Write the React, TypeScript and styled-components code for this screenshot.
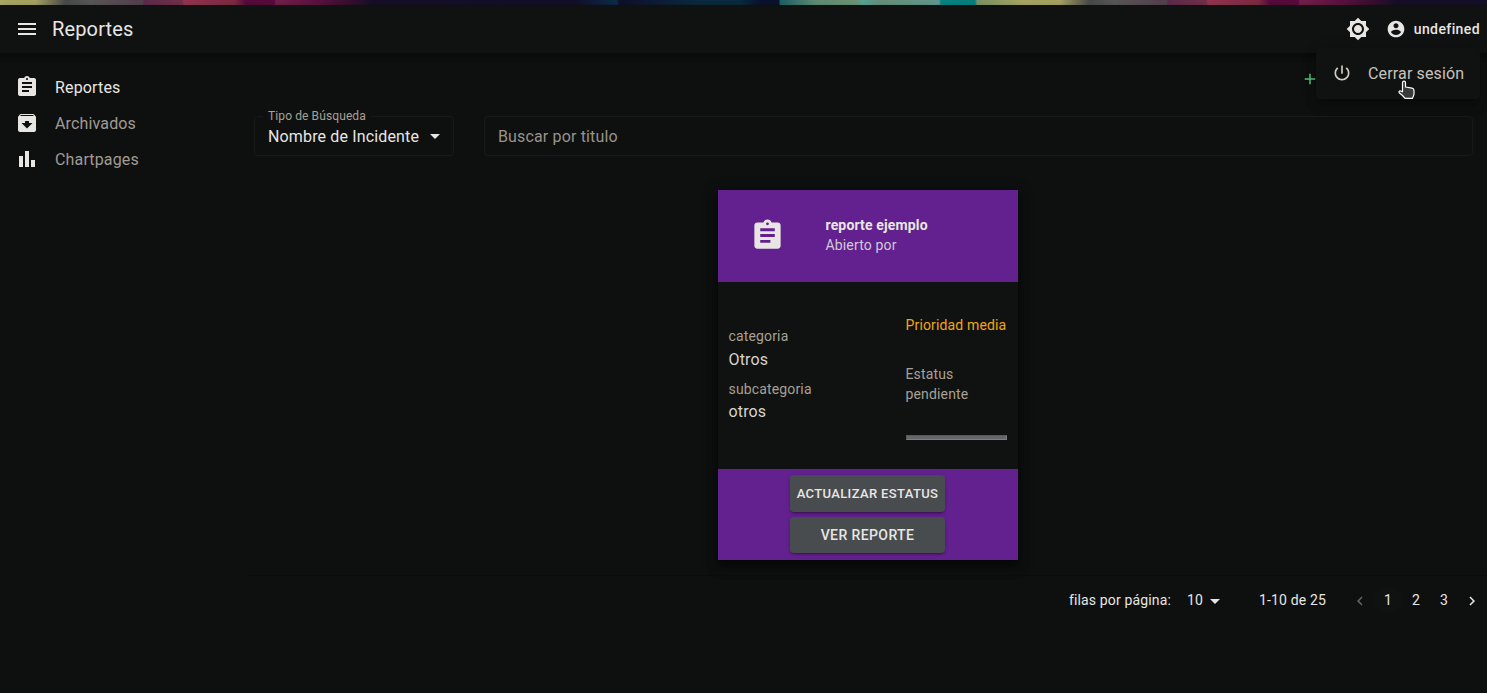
import React from "react";
import styled, { createGlobalStyle, css } from "styled-components";

const Global = createGlobalStyle`
  *, *::before, *::after { box-sizing: border-box; }
  html, body { margin: 0; background: #0e100f; }
  body { font-family: Roboto, "Liberation Sans", sans-serif; font-size: 16px; color: #e8e6e3; overflow: hidden; }
`;

const Page = styled.div`
  height: 693px;
  display: flex;
  flex-direction: column;
  background: #0e100f;
`;

const Wallpaper = styled.div`
  height: 5px;
  flex: none;
  background: repeating-linear-gradient(
    90deg,
    #aaa862 0,
    #a6a363 36px,
    #47494b 66px,
    #5a5858 90px,
    #54404e 143px,
    #5b2b4b 144px,
    #73304a 182px,
    #943550 184px,
    #7d2942 235px,
    #560a3b 246px,
    #580a3c 274px,
    #74204a 276px,
    #5a1040 320px,
    #38102f 348px,
    #160f28 372px,
    #130f28 575px,
    #0d2c48 617px,
    #0f1028 619px,
    #0e1a34 650px,
    #0a2b3d 700px,
    #0a2b3d 740px,
    #0a1230 760px,
    #0a1428 779px,
    #1b6068 780px,
    #5f8c76 815px,
    #6d9574 858px,
    #55a698 862px,
    #679079 880px,
    #629a90 939px,
    #078584 941px,
    #087f7d 975px,
    #7b9468 977px,
    #aaa862 1024px
  );
`;

const Header = styled.header`
  position: relative;
  z-index: 2;
  flex: none;
  height: 48px;
  display: flex;
  align-items: center;
  padding: 0 7px 0 15px;
  background: #101211;
  box-shadow: 0 2px 4px -1px rgba(0, 0, 0, 0.2), 0 4px 5px rgba(0, 0, 0, 0.14), 0 1px 10px rgba(0, 0, 0, 0.12);
`;

const Title = styled.h1`
  flex: 1;
  margin: 0 0 0 13px;
  font-size: 20px;
  font-weight: 400;
  line-height: 32px;
  letter-spacing: 0.15px;
`;

const UserButton = styled.div`
  display: flex;
  align-items: center;
  gap: 8px;
  margin-left: 16px;
  font-size: 14px;
  font-weight: 500;
  letter-spacing: 0.4px;
`;

const UserMenu = styled.div`
  position: absolute;
  top: 43px;
  right: 7px;
  width: 164px;
  height: 51px;
  display: flex;
  align-items: center;
  padding: 0 0 0 16px;
  border-radius: 4px;
  background: #101211;
  color: #c8c3bc;
  letter-spacing: 0.15px;
  white-space: nowrap;
  box-shadow: 0 5px 5px -3px rgba(0, 0, 0, 0.2), 0 8px 10px 1px rgba(0, 0, 0, 0.14), 0 3px 14px 2px rgba(0, 0, 0, 0.12);
`;

const MenuIcon = styled.span`
  margin: 0 16px 1px 0;
`;

const Cursor = styled.svg`
  position: absolute;
  left: 81px;
  top: 32px;
`;

const Body = styled.div`
  flex: 1;
  display: flex;
  min-height: 0;
`;

const Sidebar = styled.nav`
  width: 248px;
  flex: none;
  padding-top: 16px;
`;

const NavItem = styled.div<{ $active?: boolean }>`
  height: 36px;
  display: flex;
  align-items: center;
  gap: 16px;
  padding-left: 15px;
  letter-spacing: 0.15px;
  color: ${(p) => (p.$active ? "#e8e6e3" : "#a09b94")};
`;

const Main = styled.main`
  flex: 1;
  display: flex;
  flex-direction: column;
`;

const Actions = styled.div`
  height: 51px;
  display: flex;
  justify-content: flex-end;
  align-items: center;
  padding-right: 168px;
`;

const Filters = styled.div`
  display: flex;
  gap: 30px;
  padding: 12px 14px 0 6px;
`;

const field = css`
  height: 40px;
  margin: 0;
  display: flex;
  align-items: center;
  border: 1px solid #181a19;
  border-radius: 4px;
`;

const SelectField = styled.div`
  ${field}
  position: relative;
  width: 200px;
  padding: 0 6px 0 13px;
  justify-content: space-between;
  letter-spacing: 0.15px;
  white-space: nowrap;
`;

const FieldLabel = styled.span`
  position: absolute;
  top: -9px;
  left: 8px;
  padding: 0 5px;
  font-size: 12px;
  line-height: 16px;
  letter-spacing: 0.11px;
  color: #a8a095;
  background: #0e100f;
`;

const SearchField = styled.div`
  ${field}
  flex: 1;
  padding-left: 13px;
  letter-spacing: 0.15px;
  color: #98938b;
`;

const CardArea = styled.section`
  height: 419px;
  display: flex;
  justify-content: center;
  padding-top: 34px;
`;

const Card = styled.article`
  width: 300px;
  height: 370px;
  display: flex;
  flex-direction: column;
  background: #101211;
  box-shadow: 0 5px 5px -3px rgba(0, 0, 0, 0.2), 0 8px 10px 1px rgba(0, 0, 0, 0.3), 0 3px 14px 2px rgba(0, 0, 0, 0.24);
`;

const CardHeader = styled.header`
  height: 92px;
  display: flex;
  align-items: center;
  padding: 0 32px 2px;
  background: #63218f;
  font-size: 14px;
  line-height: 20px;
  letter-spacing: 0.15px;
`;

const CardHeading = styled.div`
  margin-left: 41px;
  color: #d2c9d8;
`;

const CardTitle = styled.div`
  font-weight: 700;
  letter-spacing: 0.15px;
  color: #e8e6e3;
`;

const CardBody = styled.div`
  height: 187px;
  display: flex;
  justify-content: space-between;
  padding: 0 11px;
`;

const Details = styled.dl`
  margin: 0;
  padding-top: 44px;
`;

const Term = styled.dt`
  margin-bottom: 1.5px;
  font-size: 14px;
  line-height: 20px;
  letter-spacing: 0.15px;
  color: #a8a095;
`;

const Value = styled.dd`
  margin: 0 0 7px;
  line-height: 24px;
  letter-spacing: 0.15px;
  color: #d8d4ce;
`;

const Status = styled.div`
  width: 101px;
  padding-top: 33px;
  font-size: 14px;
  line-height: 20px;
  letter-spacing: 0.15px;
  color: #a8a095;
`;

const Priority = styled.div`
  margin-bottom: 29px;
  white-space: nowrap;
  color: #f0a616;
`;

const StatusBar = styled.div`
  height: 5px;
  margin-top: 31px;
  background: #636769;
  border: 1px solid;
  border-color: #555a5c #7c8082 #7c8082 #555a5c;
`;

const CardActions = styled.footer`
  height: 91px;
  display: flex;
  flex-direction: column;
  align-items: center;
  gap: 5px;
  padding-top: 6px;
  background: #63218f;
`;

const CardButton = styled.button<{ $small?: boolean }>`
  width: 155px;
  height: ${(p) => (p.$small ? "37px" : "36px")};
  padding: 0;
  border: 0;
  border-radius: 4px;
  background: #484c4f;
  color: #e8e6e3;
  font: 500 ${(p) => (p.$small ? "13px" : "14px")} Roboto, sans-serif;
  letter-spacing: ${(p) => (p.$small ? "0.37px" : "0.4px")};
  white-space: nowrap;
  box-shadow: 0 3px 1px -2px rgba(0, 0, 0, 0.2), 0 2px 2px rgba(0, 0, 0, 0.14), 0 1px 5px rgba(0, 0, 0, 0.12);
`;

const Pagination = styled.footer`
  height: 48px;
  display: flex;
  align-items: center;
  justify-content: flex-end;
  padding-right: 1px;
  border-top: 1px solid #0a0c0b;
  font-size: 14px;
  letter-spacing: 0.15px;
`;

const PageSize = styled.div`
  display: flex;
  align-items: center;
  margin: 0 32px 0 16px;
`;

const Pages = styled.div`
  display: flex;
  margin-left: 20px;
`;

const PageItem = styled.span<{ $active?: boolean; $dim?: boolean }>`
  width: 28px;
  height: 26px;
  display: flex;
  align-items: center;
  justify-content: center;
  border-radius: 13px;
  background: ${(p) => (p.$active ? "#101211" : "transparent")};
  opacity: ${(p) => (p.$dim ? 0.4 : 1)};
`;

const Lowered = styled.span`
  margin-top: 2px;
`;

const icons = {
  menu: "M3 18h18v-2H3v2zm0-5h18v-2H3v2zm0-7v2h18V6H3z",
  assignment:
    "M19 3h-4.18C14.4 1.84 13.3 1 12 1c-1.3 0-2.4.84-2.82 2H5c-1.1 0-2 .9-2 2v14c0 1.1.9 2 2 2h14c1.1 0 2-.9 2-2V5c0-1.1-.9-2-2-2zm-7 0c.55 0 1 .45 1 1s-.45 1-1 1-1-.45-1-1 .45-1 1-1zm2 14H7v-2h7v2zm3-4H7v-2h10v2zm0-4H7V7h10v2z",
  archive:
    "M20.54 5.23l-1.39-1.68C18.88 3.21 18.47 3 18 3H6c-.47 0-.88.21-1.16.55L3.46 5.23C3.17 5.57 3 6.02 3 6.5V19c0 1.1.9 2 2 2h14c1.1 0 2-.9 2-2V6.5c0-.48-.17-.93-.46-1.27zM12 17.5L6.5 12H10v-2h4v2h3.5L12 17.5zM5.12 5l.81-1h12l.94 1H5.12z",
  chart: "M4 9h4v11H4zM16 13h4v7h-4zM10 4h4v16h-4z",
  brightness:
    "M20 8.69V4h-4.69L12 .69 8.69 4H4v4.69L.69 12 4 15.31V20h4.69L12 23.31 15.31 20H20v-4.69L23.31 12 20 8.69zM12 18c-3.31 0-6-2.69-6-6s2.69-6 6-6 6 2.69 6 6-2.69 6-6 6zm0-10c-2.21 0-4 1.79-4 4s1.79 4 4 4 4-1.79 4-4-1.79-4-4-4z",
  account:
    "M12 2C6.48 2 2 6.48 2 12s4.48 10 10 10 10-4.48 10-10S17.52 2 12 2zm0 3c1.66 0 3 1.34 3 3s-1.34 3-3 3-3-1.34-3-3 1.34-3 3-3zm0 14.2c-2.5 0-4.71-1.28-6-3.22.03-1.99 4-3.08 6-3.08 1.99 0 5.97 1.09 6 3.08-1.29 1.94-3.5 3.22-6 3.22z",
  power:
    "M13 3h-2v10h2V3zm4.83 2.17l-1.42 1.42C17.99 7.86 19 9.81 19 12c0 3.87-3.13 7-7 7s-7-3.13-7-7c0-2.19 1.01-4.14 2.58-5.42L6.17 5.17C4.23 6.82 3 9.26 3 12c0 4.97 4.03 9 9 9s9-4.03 9-9c0-2.74-1.23-5.18-3.17-6.83z",
  plus: "M19 13h-6v6h-2v-6H5v-2h6V5h2v6h6v2z",
  dropdown: "M7 10l5 5 5-5z",
  left: "M15.41 7.41L14 6l-6 6 6 6 1.41-1.41L10.83 12z",
  right: "M10 6L8.59 7.41 13.17 12l-4.58 4.59L10 18l6-6z",
};

const Svg = styled.svg`
  display: block;
  flex: none;
`;

function Icon({ name, size = 24, color = "#e8e6e3" }: { name: keyof typeof icons; size?: number; color?: string }) {
  return (
    <Svg width={size} height={size} viewBox="0 0 24 24" fill={color}>
      <path d={icons[name]} />
    </Svg>
  );
}

export default function App() {
  return (
    <Page>
      <Global />
      <Wallpaper />
      <Header>
        <Icon name="menu" />
        <Title>Reportes</Title>
        <Icon name="brightness" />
        <UserButton>
          <Icon name="account" size={20} />
          undefined
        </UserButton>
        <UserMenu>
          <MenuIcon>
            <Icon name="power" size={20} color="#d0ccc6" />
          </MenuIcon>
          Cerrar sesión
          <Cursor width="19" height="25" viewBox="0 0 19 25">
            <path
              d="M6.500 6.200C7.700 6.200 8 7 8 7.800V12l6.500 1.200c1.400.3 2 1 2 2.200v4l-1.500 4H7.500L5 20.500 1.700 17.700c-.7-1 .3-2.200 1.500-1.700L5 16.800V7.800c0-.9.5-1.600 1.500-1.600z"
              transform="translate(0.5 -5)"
              fill="#3b3b3b"
              stroke="#ffffff"
              strokeWidth="1.2"
              strokeLinejoin="round"
            />
          </Cursor>
        </UserMenu>
      </Header>
      <Body>
        <Sidebar>
          <NavItem $active>
            <Icon name="assignment" />
            Reportes
          </NavItem>
          <NavItem>
            <Icon name="archive" />
            Archivados
          </NavItem>
          <NavItem>
            <Icon name="chart" />
            Chartpages
          </NavItem>
        </Sidebar>
        <Main>
          <Actions>
            <Icon name="plus" size={18} color="#58c47c" />
          </Actions>
          <Filters>
            <SelectField>
              <FieldLabel>Tipo de Búsqueda</FieldLabel>
              Nombre de Incidente
              <Icon name="dropdown" />
            </SelectField>
            <SearchField>Buscar por titulo</SearchField>
          </Filters>
          <CardArea>
            <Card>
              <CardHeader>
                <Icon name="assignment" size={35} />
                <CardHeading>
                  <CardTitle>reporte ejemplo</CardTitle>
                  Abierto por
                </CardHeading>
              </CardHeader>
              <CardBody>
                <Details>
                  <Term>categoria</Term>
                  <Value>Otros</Value>
                  <Term>subcategoria</Term>
                  <Value>otros</Value>
                </Details>
                <Status>
                  <Priority>Prioridad media</Priority>
                  <div>Estatus</div>
                  <div>pendiente</div>
                  <StatusBar />
                </Status>
              </CardBody>
              <CardActions>
                <CardButton $small>ACTUALIZAR ESTATUS</CardButton>
                <CardButton>VER REPORTE</CardButton>
              </CardActions>
            </Card>
          </CardArea>
          <Pagination>
            filas por página:
            <PageSize>
              10
              <Lowered>
                <Icon name="dropdown" />
              </Lowered>
            </PageSize>
            1-10 de 25
            <Pages>
              <PageItem $dim>
                <Lowered>
                  <Icon name="left" size={18} />
                </Lowered>
              </PageItem>
              <PageItem $active>1</PageItem>
              <PageItem>2</PageItem>
              <PageItem>3</PageItem>
              <PageItem>
                <Lowered>
                  <Icon name="right" size={18} />
                </Lowered>
              </PageItem>
            </Pages>
          </Pagination>
        </Main>
      </Body>
    </Page>
  );
}
